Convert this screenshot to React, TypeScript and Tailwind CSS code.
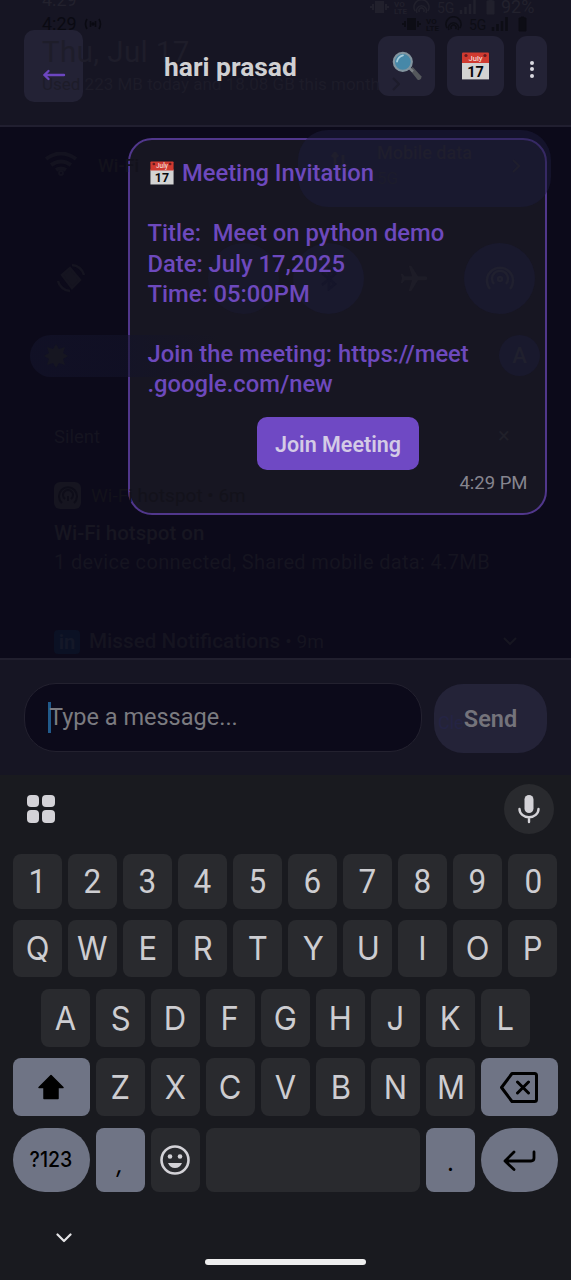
import React from "react";

function CalendarIcon({ className }: { className: string }) {
  return (
    <svg viewBox="0 0 27 28" className={className}>
      <path d="M0 10h27v17.4H0z" fill="#d3d3d3" />
      <path d="M0 1.5Q0 .5 1 .5h25q1 0 1 1V11H0z" fill="#d03a30" />
      <circle cx="4" cy="3.5" r="1.6" fill="#681b20" />
      <circle cx="23" cy="3.5" r="1.6" fill="#681b20" />
      <text x="13.5" y="8.7" textAnchor="middle" fontFamily="Roboto, sans-serif" fontSize="7.6" fontWeight="500" fill="#f2d5d2">July</text>
      <text x="13.5" y="24.6" textAnchor="middle" fontFamily="Roboto, sans-serif" fontSize="14.5" fontWeight="700" fill="#08080c">17</text>
    </svg>
  );
}

function SearchIcon() {
  return (
    <svg viewBox="0 0 30 30" className="h-[30px] w-[30px]">
      <path d="M17.5 18.5l3.2-2.6 8.6 9.4q.6 1.8-.8 3-1.4 1.2-2.9.4z" fill="#55585c" />
      <path d="M16 16l5 4.5" stroke="#7b8084" strokeWidth="2.4" />
      <circle cx="10.8" cy="10.8" r="9" fill="#4688a8" stroke="#83959f" strokeWidth="2.2" />
      <path d="M5 10.5q1-5 6-6.2" stroke="#a7cddb" strokeWidth="1.8" fill="none" strokeLinecap="round" />
    </svg>
  );
}

function StatusIcons({ className }: { className: string }) {
  return (
    <div className={className}>
      <svg viewBox="0 0 88 16" className="h-4 w-[88px]" fill="none" stroke="currentColor">
        <path d="M6 3h7v10H6zM3 5v6M1 7v2M16 5v6M18 7v2" strokeWidth="2" fill="currentColor" />
        <path d="M47 14a5 5 0 1 1 9 0M49.500 13a2.500 2.500 0 1 1 4 0M45 12a7.500 7.500 0 1 1 13 0" strokeWidth="1.600" />
        <text x="24" y="8" fontSize="8" fontWeight="700" fontFamily="Roboto, sans-serif" stroke="none" fill="currentColor">VO</text>
        <text x="24" y="15" fontSize="8" fontWeight="700" fontFamily="Roboto, sans-serif" stroke="none" fill="currentColor">LTE</text>
        <text x="67" y="13.5" fontSize="14" fontFamily="Roboto, sans-serif" stroke="none" fill="currentColor">5G</text>
      </svg>
      <svg viewBox="0 0 38 16" className="h-4 w-[38px]" stroke="currentColor" fill="currentColor">
        <path d="M3 11v4M7.500 8v7M12 5v10M16.500 1v14" strokeWidth="2.500" />
        <path d="M29 2h2V1h3v1h2v13h-7z" strokeWidth="1" />
      </svg>
    </div>
  );
}

/* Notification shade that is fading out over the screen. */
function FadingShade() {
  return (
    <div className="pointer-events-none absolute inset-x-0 top-0 h-[775px] overflow-hidden whitespace-nowrap">
      <div className="absolute -top-[12px] left-[42px] text-[18px] leading-6 text-[#22212d]">4:29</div>
      <StatusIcons className="absolute -top-[1px] left-[370px] flex text-[#21202c]" />
      <div className="absolute -top-[5px] left-[501px] text-[18px] leading-6 text-[#22212d]">92%</div>
      <div className="absolute top-[12px] left-[42px] flex items-center gap-1.5 text-[18px] leading-6 text-[#0a0a12]">
        4:29
        <svg viewBox="0 0 20 12" className="h-3 w-5" fill="none" stroke="currentColor" strokeWidth="1.600">
          <path d="M4 1q-3 5 0 10M7.500 3v6M12.500 3v6M16 1q3 5 0 10" />
          <circle cx="10" cy="6" r="1" />
        </svg>
      </div>
      <StatusIcons className="absolute top-[16px] left-[402px] flex text-[#0d0d15]" />
      <div className="absolute top-[34px] left-[42px] text-[29.500px] leading-9 tracking-[0.4px] text-[#1e1d2a]">Thu, Jul 17</div>
      <div className="absolute top-[73px] left-[42px] text-[17px] leading-[22px] text-[#1d1c29]">Used 223 MB today and 18.08 GB this month</div>
      <svg viewBox="0 0 8 14" className="absolute top-[77px] left-[392px] h-[14px] w-2" fill="none" stroke="#1d1c2b" strokeWidth="2"><path d="M1 1l6 6-6 6" /></svg>

      <svg viewBox="0 0 32 24" className="absolute top-[152px] left-[45px] h-6 w-8" fill="none" stroke="#13121f" strokeWidth="4">
        <path d="M1 7q15-11 30 0M6 13q10-7 20 0M11 18q5-3 10 0" />
        <circle cx="16" cy="21" r="1" />
      </svg>
      <div className="absolute top-[155px] left-[98px] text-[18px] leading-[22px] font-medium text-[#13121c]">Wi-Fi</div>
      <div className="absolute top-[130px] left-[298px] h-[77px] w-[253px] rounded-[30px] bg-[#1b1b3b]/50" />
      <div className="absolute top-[142px] left-[377px] text-[18px] leading-[22px] font-medium text-[#1f1e2d]">Mobile data</div>
      <div className="absolute top-[167px] left-[377px] text-[17px] leading-[22px] text-[#1c1c2c]">5G</div>
      <svg viewBox="0 0 16 18" className="absolute top-[152px] left-[331px] h-[18px] w-4" stroke="#1f1e2d" strokeWidth="3" fill="none"><path d="M4 1v14M12 3v14M1 5l3-4 3 4M9 13l3 4 3-4" /></svg>
      <svg viewBox="0 0 8 14" className="absolute top-[159px] left-[512px] h-[14px] w-2" fill="none" stroke="#1f1e2d" strokeWidth="2"><path d="M1 1l6 6-6 6" /></svg>

      <svg viewBox="0 0 30 30" className="absolute top-[263px] left-[56px] size-[30px]" fill="none" stroke="#151420" strokeWidth="2.500">
        <path d="M6 12l8-7 10 12-8 8z" fill="#151420" />
        <path d="M2 18a13 13 0 0 0 12 10M28 12A13 13 0 0 0 16 2" />
      </svg>
      <div className="absolute top-[243px] left-[208px] size-[71px] rounded-full bg-[#1b1b38]/40" />
      <div className="absolute top-[243px] left-[293px] size-[71px] rounded-full bg-[#1b1b38]/50" />
      <svg viewBox="0 0 20 24" className="absolute top-[267px] left-[319px] h-6 w-5" fill="none" stroke="#15152a" strokeWidth="2.500"><path d="M3 6l13 11-6 5V2l6 5L3 18" /></svg>
      <svg viewBox="0 0 24 24" className="absolute top-[263px] left-[398px] size-[32px] rotate-90" fill="#1d1c27"><path d="M21 16v-2l-8-5V3.500a1.500 1.500 0 0 0-3 0V9l-8 5v2l8-2.500V19l-2 1.500V22l3.500-1 3.500 1v-1.500L13 19v-5.500z" /></svg>
      <div className="absolute top-[243px] left-[464px] size-[71px] rounded-full bg-[#1b1b38]/50" />
      <svg viewBox="0 0 30 30" className="absolute top-[264px] left-[485px] size-[30px]" fill="none" stroke="#20202f" strokeWidth="2.500"><path d="M5 25a13 13 0 1 1 20 0M9 20a8 8 0 1 1 12 0" /><circle cx="15" cy="15" r="2" /></svg>

      <div className="absolute top-[335px] left-[30px] h-[42px] w-[190px] rounded-l-full bg-linear-to-r from-[#13132a]/70 via-[#13132a]/60 to-transparent" />
      <svg viewBox="0 0 24 24" className="absolute top-[344px] left-[44px] size-6" fill="#161621"><path d="M12 0l3 5 6-2-2 6 5 3-5 3 2 6-6-2-3 5-3-5-6 2 2-6-5-3 5-3-2-6 6 2z" /></svg>
      <div className="absolute top-[335px] left-[499px] flex size-[41px] items-center justify-center rounded-full bg-[#1b1b38]/50 text-[22px] font-medium text-[#20202e]">A</div>

      <div className="absolute top-[426px] left-[54px] text-[18.500px] leading-[22px] text-[#151420]">Silent</div>
      <div className="absolute top-[424px] left-[498px] text-[22px] leading-6 text-[#20202a]">×</div>
      <div className="absolute top-[482px] left-[54px] flex size-[27px] items-center justify-center rounded-md bg-[#161520]">
        <svg viewBox="0 0 20 20" className="size-5" fill="none" stroke="#0e0d19" strokeWidth="2"><path d="M4 17a9 9 0 1 1 12 0M7 13a5 5 0 1 1 6 0M10 10v5" /></svg>
      </div>
      <div className="absolute top-[485px] left-[91px] text-[19px] leading-[22px] text-[#13121b]">Wi-Fi hotspot • 6m</div>
      <div className="absolute top-[521px] left-[54px] text-[20.500px] leading-6 font-medium text-[#171621]">Wi-Fi hotspot on</div>
      <div className="absolute top-[550px] left-[54px] text-[20px] leading-6 tracking-[0.34px] text-[#151420]">1 device connected, Shared mobile data: 4.7MB</div>
      <div className="absolute top-[630px] left-[54px] flex h-[24px] w-[26px] items-center justify-center rounded-sm bg-[#0b1124] text-[20px] font-bold text-[#141828]">in</div>
      <div className="absolute top-[629px] left-[89px] text-[20.700px] leading-6 text-[#151420]"><span className="font-medium">Missed Notifications</span> <span className="text-[19px]">• 9m</span></div>
      <svg viewBox="0 0 16 10" className="absolute top-[636px] left-[502px] h-[10px] w-4" fill="none" stroke="#171621" strokeWidth="2"><path d="M2 2l6 6 6-6" /></svg>
      <div className="absolute top-[712px] left-[438px] text-[18px] leading-[22px] text-[#242444]">Cle</div>
    </div>
  );
}

function Header() {
  return (
    <header className="flex h-[127px] shrink-0 items-start border-b-2 border-[#211f30] bg-[#161523] pr-6 pl-6">
      <button className="mt-[30px] flex h-[72px] w-[59px] items-center justify-center rounded-[10px] bg-[#232235]">
        <svg viewBox="0 0 24 14" className="relative z-10 mt-[17px] h-[14px] w-6" fill="none" stroke="#6c46c0" strokeWidth="2.400" strokeLinecap="round" strokeLinejoin="round">
          <path d="M22 7H2.500M6.500 3L2.300 7l4.200 4" />
        </svg>
      </button>
      <h1 className="relative z-10 mt-[50px] ml-[81px] w-[214px] text-[26.400px] leading-[34px] font-bold whitespace-nowrap text-[#d0d0d2]">hari prasad</h1>
      <div className="mt-9 flex gap-3">
        <button className="flex h-[60px] w-[57px] items-center justify-center rounded-[11px] bg-[#232235]"><SearchIcon /></button>
        <button className="flex h-[60px] w-[57px] items-center justify-center rounded-[11px] bg-[#232235]"><CalendarIcon className="h-7 w-[27px]" /></button>
        <button className="flex h-[60px] w-[31px] flex-col items-center justify-center gap-[2.500px] rounded-[11px] bg-[#232235] pt-1.5">
          <i className="size-1 rounded-full bg-[#d9d8df]" />
          <i className="size-1 rounded-full bg-[#d9d8df]" />
          <i className="size-1 rounded-full bg-[#d9d8df]" />
        </button>
      </div>
    </header>
  );
}

function Message() {
  return (
    <section className="flex h-[531px] shrink-0 items-start justify-end px-6 pt-[11px]">
      <article className="flex h-[377px] w-[419px] flex-col rounded-[24px] border-2 border-[#51378c] bg-[#171622] px-[17.500px] pt-[18px]">
        <div className="relative z-10 text-[23.750px] leading-[30.200px] font-medium whitespace-pre text-[#6d49bd]">
          <p className="flex items-center"><CalendarIcon className="mr-[8px] ml-[2.500px] h-6 w-6" />Meeting Invitation</p>
          <p>{" "}</p>
          <p>Title:  Meet on python demo</p>
          <p>Date: July 17,2025</p>
          <p>Time: 05:00PM</p>
          <p>{" "}</p>
          <p>Join the meeting: https://meet</p>
          <p>.google.com/new</p>
        </div>
        <button className="relative z-10 mt-[17.500px] ml-[109.500px] h-[53px] w-[162px] rounded-[10px] bg-[#6f49c4] pt-0.5 text-[21.500px] font-semibold whitespace-nowrap text-[#d4cbe6]">Join Meeting</button>
        <time className="relative z-10 mt-0.5 self-end text-[18.500px] leading-[22px] text-[#86858f]">4:29 PM</time>
      </article>
    </section>
  );
}

function Composer() {
  return (
    <section className="flex h-[117px] shrink-0 items-start gap-3 border-t-2 border-[#211f2e] bg-[#161523] px-6 pt-[23px]">
      <div className="flex h-[69px] w-[398px] items-center rounded-[32px] border-[1.500px] border-[#23212f] bg-[#0c0a1a] pl-[23px]">
        <span className="h-[31px] w-[3px] bg-[#215a8b]" />
        <span className="relative z-10 mt-px -ml-0.5 text-[23.500px] whitespace-nowrap text-[#7b7b80]">Type a message...</span>
      </div>
      <button className="mt-px h-[69px] w-[113px] rounded-[29px] bg-[#242338] pt-0.5 text-[23.500px] font-semibold text-[#74737b]"><span className="relative z-10">Send</span></button>
    </section>
  );
}

function Key({ label }: { label: string }) {
  return (
    <button className="flex min-w-0 flex-1 items-center justify-center rounded-[8px] bg-[#292a2e]">
      <span className="block scale-x-[0.94]">{label}</span>
    </button>
  );
}

function KeyRow({ keys, className }: { keys: string; className: string }) {
  return (
    <div className={className}>
      {keys.split("").map((k) => <Key key={k} label={k} />)}
    </div>
  );
}

function Keyboard() {
  return (
    <section className="flex h-[505px] shrink-0 flex-col bg-[#191a1f] pr-[13.500px] pl-[13px] font-[Inter,sans-serif]">
      <div className="flex h-[79px] items-start justify-between pr-1 pl-[13.500px]">
        <div className="mt-[19.500px] grid grid-cols-2 gap-[3px]">
          <i className="size-[12.500px] rounded-[4px] bg-[#d3d2d7]" />
          <i className="size-[12.500px] rounded-[4px] bg-[#d3d2d7]" />
          <i className="size-[12.500px] rounded-[4px] bg-[#d3d2d7]" />
          <i className="size-[12.500px] rounded-[4px] bg-[#d3d2d7]" />
        </div>
        <div className="mt-[9px] flex size-[50px] items-center justify-center rounded-full bg-[#292a2e]">
          <svg viewBox="0 0 24 30" className="h-[30px] w-6" fill="none" stroke="#d3d2d7" strokeWidth="2.400" strokeLinecap="round">
            <rect x="7.500" y="1" width="9" height="18" rx="4.500" fill="#d3d2d7" stroke="none" />
            <path d="M2.500 15a9.500 8.200 0 0 0 19 0M12 23.500V28" />
          </svg>
        </div>
      </div>
      <KeyRow keys="1234567890" className="flex h-[55px] gap-1.5 pt-0 font-[Roboto,sans-serif] text-[33.500px] leading-none text-[#cdcdd1]" />
      <KeyRow keys="QWERTYUIOP" className="mt-[11px] flex h-[57px] gap-1.5 text-[33px] leading-none text-[#cdcdd1]" />
      <KeyRow keys="ASDFGHJKL" className="mt-3 flex h-[58px] gap-1.5 px-[27.500px] text-[33px] leading-none text-[#cdcdd1]" />
      <div className="mt-[11px] flex h-[58px] gap-1.5">
        <button className="flex w-[76.500px] items-center justify-center rounded-[8px] bg-[#6f7485]">
          <svg viewBox="0 0 28 26" className="h-[26px] w-7"><path d="M14 1.500L26 13.500h-5v11H7v-11H2z" fill="#000" stroke="#000" strokeWidth="1.500" strokeLinejoin="round" /></svg>
        </button>
        <KeyRow keys="ZXCVBNM" className="flex flex-1 gap-1.5 text-[33px] leading-none text-[#cdcdd1]" />
        <button className="flex w-[76.500px] items-center justify-center rounded-[8px] bg-[#6f7485]">
          <svg viewBox="0 0 38 31" className="h-[31px] w-[38px]" fill="none" stroke="#000" strokeWidth="3" strokeLinejoin="round" strokeLinecap="round">
            <path d="M12 1.500h22.500q2 0 2 2v24q0 2-2 2H12L1.500 15.500zM17.500 10l11 11M28.500 10l-11 11" />
          </svg>
        </button>
      </div>
      <div className="mt-3 flex h-[64px] gap-1.5 text-black">
        <button className="flex w-[76.500px] items-center justify-center rounded-[32px] bg-[#6f7485] text-[21px] font-medium"><span className="block scale-x-[0.93]">?123</span></button>
        <button className="w-[49px] rounded-[8px] bg-[#6f7485] pt-2.5 text-[24px] italic">,</button>
        <button className="flex w-[49px] items-center justify-center rounded-[8px] bg-[#292a2e]">
          <svg viewBox="0 0 30 30" className="h-[30px] w-[30px]">
            <circle cx="15" cy="15" r="13.500" fill="none" stroke="#d3d2d7" strokeWidth="2.600" />
            <circle cx="10" cy="11.500" r="2.300" fill="#d3d2d7" />
            <circle cx="20" cy="11.500" r="2.300" fill="#d3d2d7" />
            <path d="M8 18h14q-2 5-7 5t-7-5z" fill="#d3d2d7" />
          </svg>
        </button>
        <div className="flex-1 rounded-[8px] bg-[#292a2e]" />
        <button className="w-[49px] rounded-[8px] bg-[#6f7485] pt-1.5 text-[24px]">.</button>
        <button className="flex w-[76.500px] items-center justify-center rounded-[32px] bg-[#6f7485]">
          <svg viewBox="0 0 33 21" className="h-[21px] w-[33px]" fill="none" stroke="#000" strokeWidth="2.800" strokeLinecap="round" strokeLinejoin="round">
            <path d="M31 2v6q0 3-3 3H2M11 2L2 11l9 8.500" />
          </svg>
        </button>
      </div>
      <div className="flex flex-1 flex-col">
        <svg viewBox="0 0 16 10" className="mt-[41px] ml-[42.500px] h-[10px] w-4" fill="none" stroke="#e4e4e6" strokeWidth="2.200" strokeLinecap="round" strokeLinejoin="round"><path d="M1.500 1.500L8 8l6.500-6.500" /></svg>
        <div className="mt-[16px] ml-[191.500px] h-[6px] w-[161px] rounded-full bg-[#eeeeee]" />
      </div>
    </section>
  );
}

export default function App() {
  return (
    <main className="relative flex h-[1280px] w-[571px] flex-col overflow-hidden bg-[#0c0a1a] font-[Roboto,sans-serif]">
      <Header />
      <Message />
      <Composer />
      <Keyboard />
      <FadingShade />
    </main>
  );
}
